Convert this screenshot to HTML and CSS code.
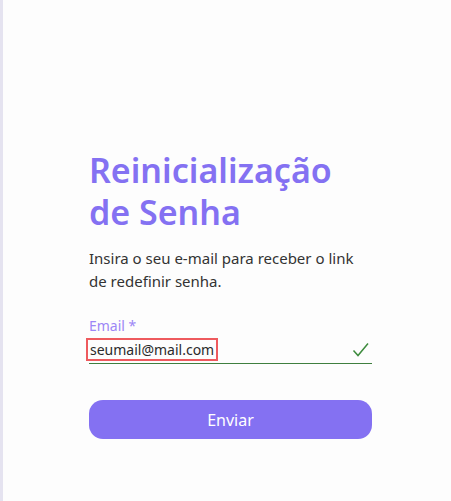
FILE: index.html
```html
<!DOCTYPE html>
<html lang="pt">
<head>
<meta charset="utf-8">
<title>Reinicialização de Senha</title>
<link rel="stylesheet" href="styles.css">
</head>
<body>
<div class="page">
  <main class="panel">
    <h1 class="title">Reinicialização de Senha</h1>
    <p class="lead">Insira o seu e-mail para receber o link de redefinir senha.</p>
    <form class="form">
      <label class="label">Email *</label>
      <div class="field">
        <span class="value">seumail@mail.com</span>
        <svg class="check" width="18" height="16" viewBox="0 0 18 16" aria-hidden="true">
          <path d="M1.5 8.5 L6 13.5 L16 1.5" fill="none" stroke="#3d8b3d" stroke-width="1.5"/>
        </svg>
      </div>
      <button type="button" class="btn">Enviar</button>
    </form>
  </main>
</div>
</body>
</html>
```
FILE: styles.css
```css
html, body {
  margin: 0;
  padding: 0;
  background: #fdfdfd;
}
body {
  font-family: "Noto Sans", "Open Sans", sans-serif;
}
.page {
  min-height: 501px;
  border-left: 3px solid #e5e3f0;
  box-sizing: border-box;
}
.panel {
  margin-left: 86px;
  width: 283px;
  padding-top: 149px;
}
.title {
  margin: 0;
  font-size: 34px;
  line-height: 42px;
  font-weight: 600;
  color: #8471f2;
  width: 260px;
}
.lead {
  margin: 14px 0 0;
  font-size: 15px;
  line-height: 23px;
  color: #333;
  width: 283px;
}
.form {
  margin-top: 24px;
  display: flex;
  flex-direction: column;
}
.label {
  font-size: 14px;
  line-height: 18px;
  color: #9c86f6;
}
.field {
  margin-top: 3px;
  display: flex;
  align-items: flex-end;
  justify-content: space-between;
  border-bottom: 1px solid #3f7f3f;
  padding-bottom: 2px;
}
.value {
  font-size: 14px;
  line-height: 19px;
  color: #2b2b2b;
  border: 2px solid #ee5a5e;
  padding: 0 2px;
  margin-left: -3px;
}
.check {
  margin-right: 2px;
  margin-bottom: 3px;
}
.btn {
  margin-top: 36px;
  height: 39px;
  border: none;
  border-radius: 14px;
  background: #8471f2;
  color: #fff;
  font-family: inherit;
  font-size: 16px;
  cursor: pointer;
}
```
